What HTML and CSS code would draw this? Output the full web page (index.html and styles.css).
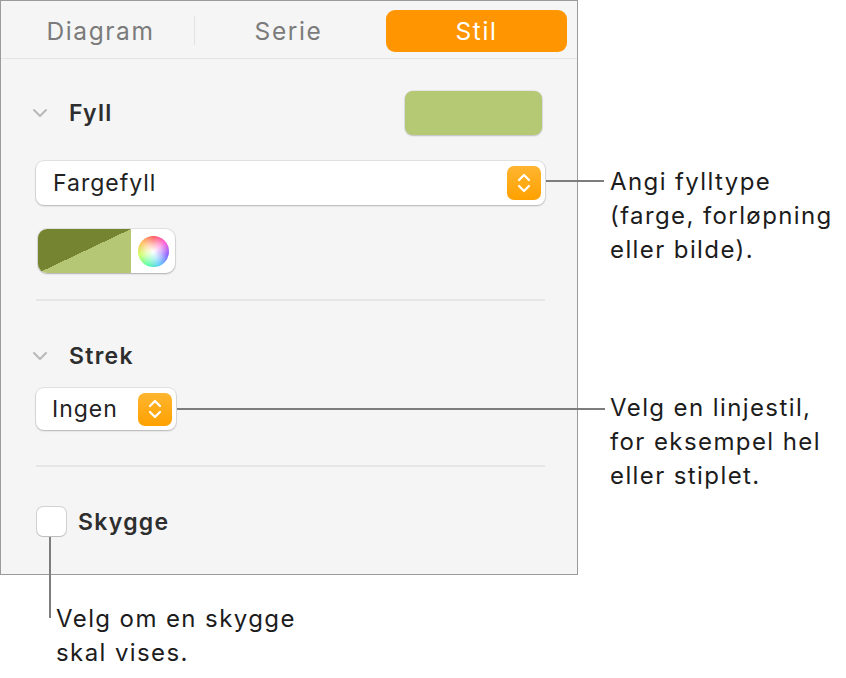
FILE: index.html
```html
<!DOCTYPE html>
<html lang="no">
<head>
<meta charset="utf-8">
<title>Stil</title>
<link rel="stylesheet" href="styles.css">
</head>
<body>
<div class="stage">
  <div class="panel">
    <div class="tabs">
      <div class="tab">Diagram</div>
      <div class="tab tab-sep">Serie</div>
      <div class="tab tab-active">Stil</div>
    </div>
    <div class="content">
      <div class="head head-fill">
        <svg class="chev" width="16" height="10" viewBox="0 0 16 10"><path d="M2 2 L8 8 L14 2" fill="none" stroke="#b9b9b9" stroke-width="2" stroke-linecap="round" stroke-linejoin="round"/></svg>
        <span class="label">Fyll</span>
        <span class="well"></span>
      </div>
      <div class="popup popup-wide">
        <span class="popup-text">Fargefyll</span>
        <span class="stepper"><svg width="16" height="24" viewBox="0 0 16 24"><path d="M3 9 L8 4 L13 9 M3 15 L8 20 L13 15" fill="none" stroke="#fff" stroke-width="2.2" stroke-linecap="round" stroke-linejoin="round"/></svg></span>
      </div>
      <div class="swatch">
        <span class="swatch-color"></span>
        <span class="swatch-wheel"><span class="wheel"></span></span>
      </div>
      <div class="rule"></div>
      <div class="head head-stroke">
        <svg class="chev" width="16" height="10" viewBox="0 0 16 10"><path d="M2 2 L8 8 L14 2" fill="none" stroke="#b9b9b9" stroke-width="2" stroke-linecap="round" stroke-linejoin="round"/></svg>
        <span class="label">Strek</span>
      </div>
      <div class="popup popup-narrow">
        <span class="popup-text">Ingen</span>
        <span class="stepper"><svg width="16" height="24" viewBox="0 0 16 24"><path d="M3 9 L8 4 L13 9 M3 15 L8 20 L13 15" fill="none" stroke="#fff" stroke-width="2.2" stroke-linecap="round" stroke-linejoin="round"/></svg></span>
      </div>
      <div class="rule rule-2"></div>
      <div class="check">
        <span class="box"></span>
        <span class="label">Skygge</span>
      </div>
    </div>
  </div>

  <div class="callout callout-fill">
    <span class="lead lead-fill"></span>
    <p class="note note-fill">Angi fylltype<br>(farge, forløpning<br>eller bilde).</p>
  </div>
  <div class="callout callout-stroke">
    <span class="lead lead-stroke"></span>
    <p class="note note-stroke">Velg en linjestil,<br>for eksempel hel<br>eller stiplet.</p>
  </div>
  <div class="callout callout-shadow">
    <span class="lead lead-shadow"></span>
    <p class="note note-shadow">Velg om en skygge<br>skal vises.</p>
  </div>
</div>
</body>
</html>
```

FILE: styles.css
```css
* { box-sizing: border-box; }

html, body {
  margin: 0;
  padding: 0;
  background: #ffffff;
}

body {
  font-family: Inter, "Liberation Sans", sans-serif;
  color: #1c1c1c;
}

.stage {
  position: relative;
  width: 846px;
  height: 678px;
}

.panel {
  width: 578px;
  height: 575px;
  background: #f5f5f5;
  border: 1px solid #9b9b9b;
  display: flex;
  flex-direction: column;
}

.tabs {
  height: 58px;
  border-bottom: 1px solid #e4e4e4;
  display: grid;
  grid-template-columns: 181px 181px 181px;
  column-gap: 7px;
  padding: 9px 0 0 9px;
}

.tab {
  position: relative;
  height: 42px;
  display: flex;
  align-items: center;
  justify-content: center;
  font-size: 24.5px;
  letter-spacing: 1.6px;
  color: #7b7b7b;
  border-radius: 9px;
}

.tab-sep::before {
  content: "";
  position: absolute;
  left: -4px;
  top: 6px;
  width: 1px;
  height: 29px;
  background: #e2e2e2;
}

.tab-active {
  background: #ff9500;
  color: #ffffff;
}

.content {
  display: flex;
  flex-direction: column;
  align-items: flex-start;
  padding: 0 32px 0 35px;
}

.head {
  width: 100%;
  display: flex;
  align-items: center;
}

.head-fill {
  height: 44px;
  margin-top: 32px;
}

.head-stroke {
  height: 30px;
  margin-top: 40px;
}

.chev {
  margin-left: -4px;
  flex: none;
}

.label {
  font-size: 23px;
  font-weight: 600;
  letter-spacing: 1.3px;
  color: #2e2e2e;
}

.head .label {
  margin-left: 21px;
}

.well {
  margin-left: auto;
  margin-right: 3px;
  width: 137px;
  height: 44px;
  border-radius: 8px;
  background: #b5c873;
  box-shadow: 0 0 0 1px rgba(0,0,0,0.06), 0 1px 2px rgba(0,0,0,0.18);
}

.popup {
  display: flex;
  align-items: center;
  background: #ffffff;
  border-radius: 8px;
  box-shadow: 0 0 0 1px rgba(0,0,0,0.08), 0 1px 2px rgba(0,0,0,0.2);
  padding-left: 17px;
  padding-right: 4px;
}

.popup-wide {
  width: 100%;
  height: 44px;
  margin-top: 26px;
}

.popup-narrow {
  width: 140px;
  height: 42px;
  margin-top: 17px;
  padding-left: 16px;
}

.popup-text {
  font-size: 23px;
  letter-spacing: 1px;
  color: #222222;
}

.stepper {
  margin-left: auto;
  width: 34px;
  height: 34px;
  border-radius: 7px;
  background: linear-gradient(#ffb530, #ffa100);
  display: flex;
  align-items: center;
  justify-content: center;
}

.popup-narrow .stepper {
  height: 33px;
}

.swatch {
  margin-top: 24px;
  margin-left: 2px;
  width: 137px;
  height: 44px;
  display: flex;
  background: #ffffff;
  border-radius: 9px;
  overflow: hidden;
  box-shadow: 0 0 0 1px rgba(0,0,0,0.08), 0 1px 2px rgba(0,0,0,0.22);
}

.swatch-color {
  width: 93px;
  height: 100%;
  background: linear-gradient(to top left, #b5c774 50%, #758430 50%);
}

.swatch-wheel {
  flex: 1;
  display: flex;
  align-items: center;
  justify-content: center;
}

.wheel {
  width: 31px;
  height: 31px;
  border-radius: 50%;
  background:
    radial-gradient(circle, rgba(255,255,255,1) 0%, rgba(255,255,255,0.6) 35%, rgba(255,255,255,0) 75%),
    conic-gradient(#ff4d4d, #ff4dd2, #7a4dff, #4dc3ff, #4dff9a, #c8ff4d, #ffb84d, #ff4d4d);
}

.rule {
  width: 100%;
  height: 2px;
  background: #e6e6e6;
  margin-top: 26px;
}

.rule-2 {
  margin-top: 35px;
}

.check {
  margin-top: 40px;
  display: flex;
  align-items: center;
}

.box {
  width: 29px;
  height: 29px;
  border-radius: 6px;
  background: #ffffff;
  box-shadow: 0 0 0 1px rgba(0,0,0,0.14), 0 1px 1px rgba(0,0,0,0.1);
  margin-left: 1px;
}

.check .label {
  margin-left: 12px;
}

.callout {
  position: absolute;
  left: 0;
  top: 0;
}

.lead {
  position: absolute;
  background: #7d7d7d;
}

.lead-fill {
  left: 546px;
  top: 180px;
  width: 58px;
  height: 2px;
}

.lead-stroke {
  left: 177px;
  top: 408px;
  width: 428px;
  height: 2px;
}

.lead-shadow {
  left: 49px;
  top: 537px;
  width: 2px;
  height: 81px;
}

.note {
  position: absolute;
  margin: 0;
  font-size: 24px;
  line-height: 34px;
  letter-spacing: 1.4px;
  color: #1c1c1c;
  white-space: nowrap;
}

.note-fill {
  left: 610px;
  top: 165px;
}

.note-stroke {
  left: 610px;
  top: 391px;
}

.note-shadow {
  left: 56px;
  top: 602px;
}
```
